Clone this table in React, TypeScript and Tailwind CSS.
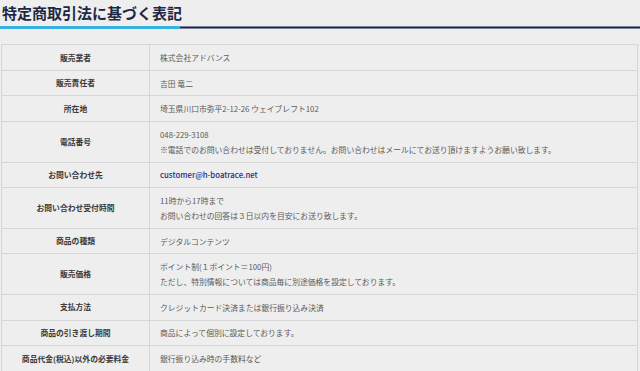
import React from 'react';

type Row = {
  label: string;
  lines: string[];
  link?: boolean;
};

const rows: Row[] = [
  { label: '販売業者', lines: ['株式会社アドバンス'] },
  { label: '販売責任者', lines: ['吉田 竜二'] },
  { label: '所在地', lines: ['埼玉県川口市弥平2-12-26 ウェイブレフト102'] },
  {
    label: '電話番号',
    lines: [
      '048-229-3108',
      '※電話でのお問い合わせは受付しておりません。お問い合わせはメールにてお送り頂けますようお願い致します。',
    ],
  },
  { label: 'お問い合わせ先', lines: ['customer@h-boatrace.net'], link: true },
  {
    label: 'お問い合わせ受付時間',
    lines: ['11時から17時まで', 'お問い合わせの回答は３日以内を目安にお送り致します。'],
  },
  { label: '商品の種類', lines: ['デジタルコンテンツ'] },
  {
    label: '販売価格',
    lines: ['ポイント制(１ポイント＝100円)', 'ただし、特別情報については商品毎に別途価格を設定しております。'],
  },
  { label: '支払方法', lines: ['クレジットカード決済または銀行振り込み決済'] },
  { label: '商品の引き渡し期間', lines: ['商品によって個別に設定しております。'] },
  { label: '商品代金(税込)以外の必要料金', lines: ['銀行振り込み時の手数料など'] },
];

export default function App() {
  return (
    <div
      className="h-[371px] w-[640px] overflow-hidden bg-[#eeeeee]"
      style={{ fontFamily: '"Noto Sans CJK JP", "Noto Sans", sans-serif' }}
    >
      <div className="pt-[3px]">
        <h1 className="pl-[2px] text-[15px] font-bold leading-[20px] text-[#1e2844]">
          特定商取引法に基づく表記
        </h1>
        <div className="mt-[3px] flex h-[3px] items-stretch">
          <div className="w-[180px] bg-[#37b2e3]" />
          <div className="flex-1 border-y border-[#7d8499] bg-[#1c2440]" />
        </div>
      </div>

      <div className="mx-[1px] mt-[15px] w-[637px] border border-[#d6d6d6] bg-[#eeeeee] text-[7.8px]">
        {rows.map((row) => (
          <div key={row.label} className="grid grid-cols-[148px_1fr] border-b border-[#d6d6d6]">
            <div className="flex min-h-[24.7px] items-center justify-center border-r border-[#d6d6d6] font-bold text-[#3a3a3a]">
              {row.label}
            </div>
            <div className="flex min-h-[24.7px] flex-col justify-center py-[4.75px] pl-[10px] leading-[15px] text-[#5a5a5a]">
              {row.lines.map((line) => (
                <p key={line} className={row.link ? 'font-medium text-[#1f2a86]' : ''}>
                  {line}
                </p>
              ))}
            </div>
          </div>
        ))}
        <div className="h-[26px]" />
      </div>
    </div>
  );
}
